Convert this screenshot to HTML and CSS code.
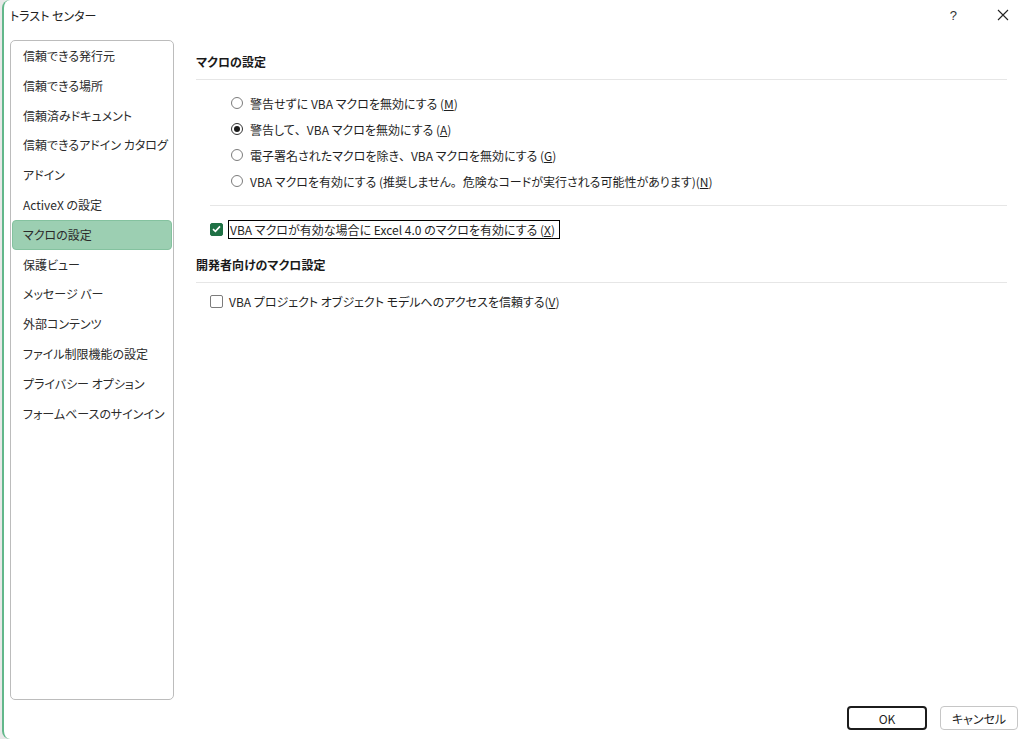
FILE: index.html
```html
<!DOCTYPE html>
<html lang="ja">
<head>
<meta charset="utf-8">
<title>トラスト センター</title>
<link rel="stylesheet" href="styles.css">
</head>
<body>
<div class="window">
  <div class="titlebar">
    <div class="title">トラスト センター</div>
    <div class="title-actions">
      <span class="help">?</span>
      <span class="close">
        <svg width="12" height="12" viewBox="0 0 12 12"><path d="M1 1 L11 11 M11 1 L1 11" stroke="#222" stroke-width="1.1" fill="none"/></svg>
      </span>
    </div>
  </div>
  <div class="main">
    <nav class="sidebar">
      <div class="nav-item">信頼できる発行元</div>
      <div class="nav-item">信頼できる場所</div>
      <div class="nav-item">信頼済みドキュメント</div>
      <div class="nav-item">信頼できるアドイン カタログ</div>
      <div class="nav-item">アドイン</div>
      <div class="nav-item">ActiveX の設定</div>
      <div class="nav-item selected">マクロの設定</div>
      <div class="nav-item">保護ビュー</div>
      <div class="nav-item">メッセージ バー</div>
      <div class="nav-item">外部コンテンツ</div>
      <div class="nav-item">ファイル制限機能の設定</div>
      <div class="nav-item">プライバシー オプション</div>
      <div class="nav-item">フォームベースのサインイン</div>
    </nav>
    <section class="content">
      <h2 class="section-head">マクロの設定</h2>
      <div class="radio-list">
        <div class="radio-row"><span class="radio"></span><span>警告せずに VBA マクロを無効にする (<u>M</u>)</span></div>
        <div class="radio-row"><span class="radio checked"></span><span>警告して<span class="fw">、</span>VBA マクロを無効にする (<u>A</u>)</span></div>
        <div class="radio-row"><span class="radio"></span><span>電子署名されたマクロを除き<span class="fw">、</span>VBA マクロを無効にする (<u>G</u>)</span></div>
        <div class="radio-row"><span class="radio"></span><span>VBA マクロを有効にする (推奨しません<span class="fw">。</span>危険なコードが実行される可能性があります)(<u>N</u>)</span></div>
      </div>
      <div class="separator"></div>
      <div class="check-row first">
        <span class="checkbox checked">
          <svg width="9" height="8" viewBox="0 0 9 8"><path d="M1 4.2 L3.4 6.4 L8 1.4" stroke="#fff" stroke-width="1.6" fill="none"/></svg>
        </span>
        <span class="focus-label">VBA マクロが有効な場合に Excel 4.0 のマクロを有効にする (<u>X</u>)</span>
      </div>
      <h2 class="section-head dev">開発者向けのマクロ設定</h2>
      <div class="check-row second">
        <span class="checkbox"></span>
        <span>VBA プロジェクト オブジェクト モデルへのアクセスを信頼する(<u>V</u>)</span>
      </div>
    </section>
  </div>
  <div class="footer">
    <button class="btn primary">OK</button>
    <button class="btn">キャンセル</button>
  </div>
</div>
</body>
</html>
```

FILE: styles.css
```css
* { box-sizing: border-box; }
html, body {
  margin: 0;
  padding: 0;
  background: #e8e8e8;
}
body {
  width: 1025px;
  height: 739px;
  overflow: hidden;
  font-family: "Noto Sans CJK JP", "Noto Sans", sans-serif;
  font-feature-settings: "palt";
  font-size: 12px;
  color: #1f1f1f;
}
.fw {
  font-feature-settings: normal;
}
.window {
  margin-left: 2px;
  height: 739px;
  background: #fff;
  border-left: 2px solid #62b78a;
  border-radius: 8px 0 0 8px;
  display: flex;
  flex-direction: column;
}
.titlebar {
  height: 32px;
  display: flex;
  align-items: center;
  justify-content: space-between;
  padding-left: 6px;
  padding-bottom: 2px;
}
.title {
  font-size: 12px;
  color: #222;
}
.title-actions {
  display: flex;
  align-items: center;
  padding-right: 16px;
}
.help {
  font-family: "Liberation Sans", sans-serif;
  font-size: 13px;
  color: #333;
  margin-right: 40px;
}
.close {
  display: flex;
  width: 12px;
  height: 12px;
}
.main {
  flex: 1;
  display: flex;
  padding-top: 8px;
  min-height: 0;
}
.sidebar {
  margin-left: 6px;
  width: 164px;
  height: 660px;
  border: 1px solid #bcbcbc;
  border-radius: 5px;
  padding: 0 1px;
  display: flex;
  flex-direction: column;
}
.nav-item {
  height: 29.8px;
  line-height: 27.8px;
  padding-left: 10px;
  color: #2b2b2b;
  white-space: nowrap;
  border: 1px solid transparent;
  border-radius: 4px;
  flex: none;
}
.nav-item.selected {
  background: #9ccfb2;
  border-color: #84c29f;
}
.content {
  flex: 1;
  padding: 12px 18px 0 22px;
}
.section-head {
  margin: 0;
  font-size: 12px;
  font-weight: bold;
  line-height: 20px;
  padding-bottom: 7px;
  border-bottom: 1px solid #e6e6e6;
  color: #1a1a1a;
}
.section-head.dev {
  margin-top: 15px;
}
.radio-list {
  margin-top: 10px;
  padding-left: 35px;
}
.radio-row {
  height: 26px;
  display: flex;
  align-items: center;
  gap: 7px;
  white-space: nowrap;
}
.radio {
  width: 12px;
  height: 12px;
  border: 1px solid #7c7c7c;
  border-radius: 50%;
  display: flex;
  align-items: center;
  justify-content: center;
  flex: none;
}
.radio.checked {
  border-color: #333;
}
.radio.checked::after {
  content: "";
  width: 6px;
  height: 6px;
  border-radius: 50%;
  background: #1a1a1a;
}
.separator {
  margin: 11px 0 0 14px;
  border-top: 1px solid #e6e6e6;
}
.check-row {
  height: 22px;
  display: flex;
  align-items: center;
  padding-left: 14px;
  white-space: nowrap;
}
.check-row.first {
  margin-top: 12px;
}
.check-row.second {
  margin-top: 7px;
  gap: 6px;
}
.checkbox {
  width: 13px;
  height: 13px;
  border: 1px solid #7c7c7c;
  border-radius: 2px;
  flex: none;
  display: flex;
  align-items: center;
  justify-content: center;
}
.checkbox.checked {
  background: #1f7145;
  border-color: #1f7145;
  margin-right: 5px;
}
.focus-label {
  border: 1px solid #000;
  height: 19px;
  line-height: 17px;
  padding: 0 4px 0 1px;
}
.footer {
  height: 39px;
  display: flex;
  justify-content: flex-end;
  align-items: flex-start;
  gap: 13px;
  padding: 6px 7px 0 0;
}
.btn {
  height: 24px;
  width: 78px;
  font-family: "Noto Sans CJK JP", "Noto Sans", sans-serif;
  font-feature-settings: "palt";
  font-size: 12px;
  color: #1f1f1f;
  background: #fff;
  border: 1px solid #c6c6c6;
  border-radius: 4px;
  padding: 0;
}
.btn.primary {
  width: 80px;
  border: 2px solid #1c1c1c;
}
```
